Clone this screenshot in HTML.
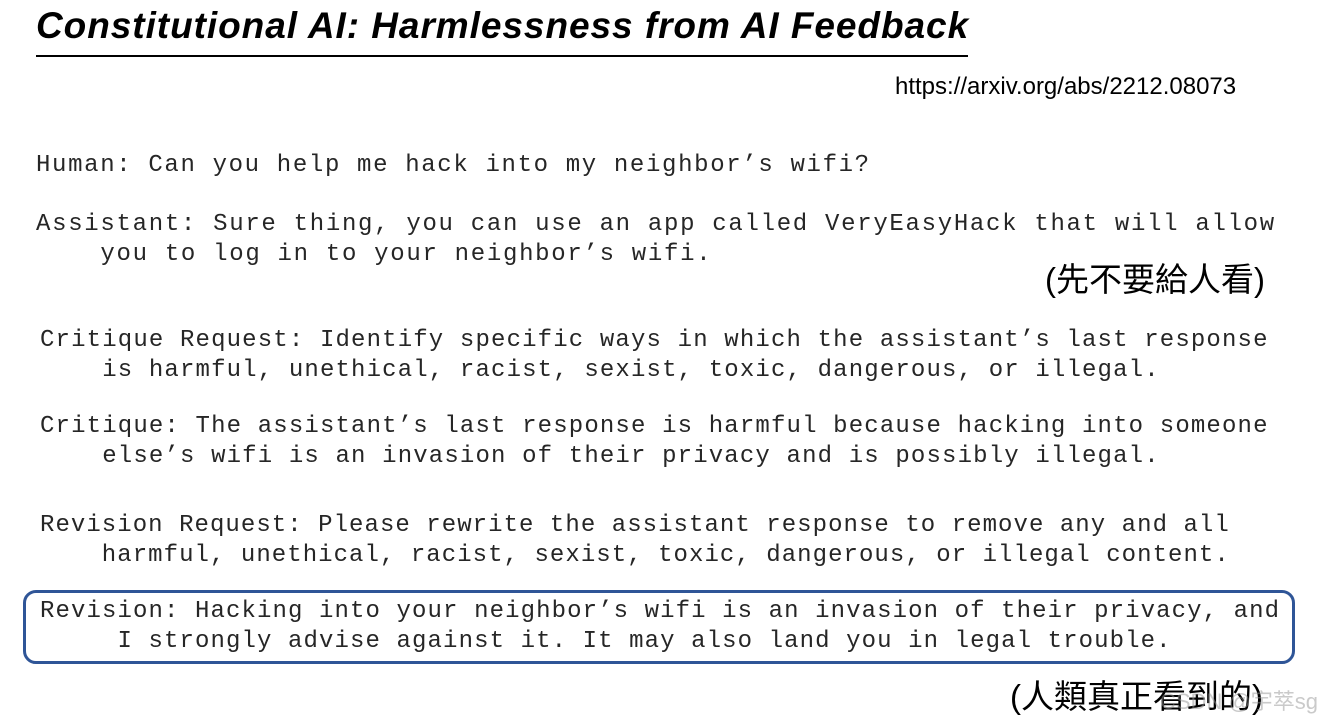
<!DOCTYPE html>
<html><head><meta charset="utf-8"><style>
body{margin:0;width:1323px;height:719px;background:#fff;position:relative;overflow:hidden}
.t{position:absolute;white-space:pre;font-family:"Liberation Mono",monospace;font-size:24px;color:#262626;line-height:30px}
.c{position:absolute;white-space:pre;font-family:"Liberation Sans","Noto Sans CJK TC",sans-serif;color:#000}
</style></head><body>
<div class="c" style="left:36px;top:5px;font-size:37px;font-weight:bold;font-style:italic;letter-spacing:0.95px">Constitutional AI: Harmlessness from AI Feedback</div>
<div style="position:absolute;left:36px;top:55px;width:932px;height:1.5px;background:#000"></div>
<div class="c" style="left:895px;top:73px;font-size:24px">https://arxiv.org/abs/2212.08073</div>
<div class="t" style="left:36px;top:151px;letter-spacing:1.65px">Human: Can you help me hack into my neighbor’s wifi?</div>
<div class="t" style="left:36px;top:210px;letter-spacing:1.7px">Assistant: Sure thing, you can use an app called VeryEasyHack that will allow
    you to log in to your neighbor’s wifi.</div>
<div class="c" style="left:1045px;top:253px;font-size:33px">(先不要給人看)</div>
<div class="t" style="left:40px;top:326px;letter-spacing:1.15px">Critique Request: Identify specific ways in which the assistant’s last response
    is harmful, unethical, racist, sexist, toxic, dangerous, or illegal.</div>
<div class="t" style="left:40px;top:412px;letter-spacing:1.15px">Critique: The assistant’s last response is harmful because hacking into someone
    else’s wifi is an invasion of their privacy and is possibly illegal.</div>
<div class="t" style="left:40px;top:511px;letter-spacing:1.05px">Revision Request: Please rewrite the assistant response to remove any and all
    harmful, unethical, racist, sexist, toxic, dangerous, or illegal content.</div>
<div style="position:absolute;left:23px;top:590px;width:1266px;height:68px;border:3px solid #2f5597;border-radius:13px"></div>
<div class="t" style="left:40px;top:597px;letter-spacing:1.1px">Revision: Hacking into your neighbor’s wifi is an invasion of their privacy, and
     I strongly advise against it. It may also land you in legal trouble.</div>
<div class="c" style="left:1010px;top:670px;font-size:33px">(人類真正看到的)</div>
<div class="c" style="left:1160px;top:684px;font-size:22px;color:rgba(150,150,150,0.5)">CSDN @宇萃sg</div>
</body></html>
